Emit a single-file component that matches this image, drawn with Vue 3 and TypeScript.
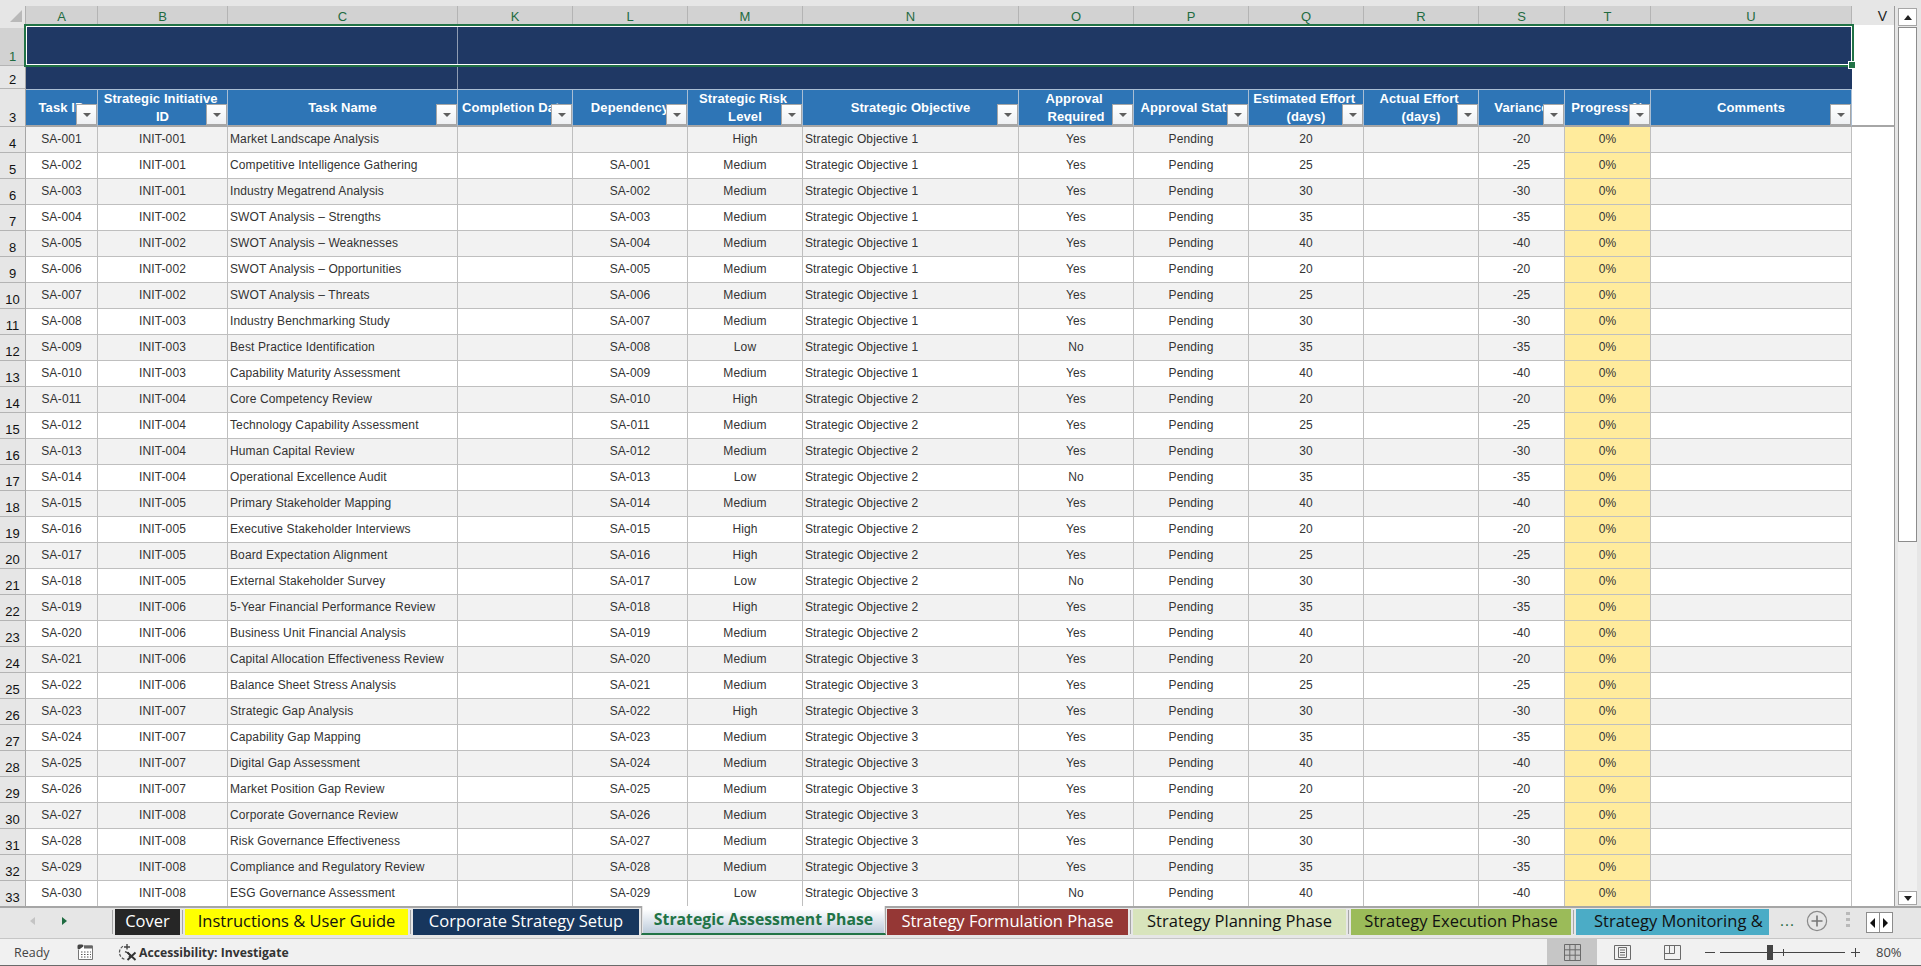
<script setup lang="ts">
const letters = ['A', 'B', 'C', 'K', 'L', 'M', 'N', 'O', 'P', 'Q', 'R', 'S', 'T', 'U']

// first lines keep their trailing space, it shifts them a bit to the left like in the sheet
const headers = [
  { label: 'Task ID', clip: false },
  { label: 'Strategic Initiative \nID', clip: false },
  { label: 'Task Name', clip: false },
  { label: 'Completion Date', clip: true },
  { label: 'Dependency', clip: false },
  { label: 'Strategic Risk \nLevel', clip: false },
  { label: 'Strategic Objective', clip: false },
  { label: 'Approval \nRequired', clip: false },
  { label: 'Approval Status', clip: false },
  { label: 'Estimated Effort \n(days)', clip: false },
  { label: 'Actual Effort \n(days)', clip: false },
  { label: 'Variance', clip: false },
  { label: 'Progress %', clip: false },
  { label: 'Comments', clip: false },
]

// name, initiative, risk
const tasks: [string, number, string][] = [
  ['Market Landscape Analysis', 1, 'High'],
  ['Competitive Intelligence Gathering', 1, 'Medium'],
  ['Industry Megatrend Analysis', 1, 'Medium'],
  ['SWOT Analysis – Strengths', 2, 'Medium'],
  ['SWOT Analysis – Weaknesses', 2, 'Medium'],
  ['SWOT Analysis – Opportunities', 2, 'Medium'],
  ['SWOT Analysis – Threats', 2, 'Medium'],
  ['Industry Benchmarking Study', 3, 'Medium'],
  ['Best Practice Identification', 3, 'Low'],
  ['Capability Maturity Assessment', 3, 'Medium'],
  ['Core Competency Review', 4, 'High'],
  ['Technology Capability Assessment', 4, 'Medium'],
  ['Human Capital Review', 4, 'Medium'],
  ['Operational Excellence Audit', 4, 'Low'],
  ['Primary Stakeholder Mapping', 5, 'Medium'],
  ['Executive Stakeholder Interviews', 5, 'High'],
  ['Board Expectation Alignment', 5, 'High'],
  ['External Stakeholder Survey', 5, 'Low'],
  ['5-Year Financial Performance Review', 6, 'High'],
  ['Business Unit Financial Analysis', 6, 'Medium'],
  ['Capital Allocation Effectiveness Review', 6, 'Medium'],
  ['Balance Sheet Stress Analysis', 6, 'Medium'],
  ['Strategic Gap Analysis', 7, 'High'],
  ['Capability Gap Mapping', 7, 'Medium'],
  ['Digital Gap Assessment', 7, 'Medium'],
  ['Market Position Gap Review', 7, 'Medium'],
  ['Corporate Governance Review', 8, 'Medium'],
  ['Risk Governance Effectiveness', 8, 'Medium'],
  ['Compliance and Regulatory Review', 8, 'Medium'],
  ['ESG Governance Assessment', 8, 'Low'],
]

const pad = (n: number) => String(n).padStart(3, '0')

const rows = tasks.map(([name, init, risk], i) => {
  const effort = 20 + (i % 5) * 5
  return {
    num: i + 4,
    id: 'SA-' + pad(i + 1),
    init: 'INIT-' + pad(init),
    name,
    dep: i === 0 ? '' : 'SA-' + pad(i),
    risk,
    objective: 'Strategic Objective ' + (i < 10 ? 1 : i < 20 ? 2 : 3),
    approval: risk === 'Low' ? 'No' : 'Yes',
    effort,
    variance: -effort,
  }
})

const tabs = [
  { name: 'Cover', cls: 'cover', width: 65 },
  { name: 'Instructions & User Guide', cls: 'guide', width: 223 },
  { name: 'Corporate Strategy Setup', cls: 'setup', width: 226 },
  { name: 'Strategic Assessment Phase', cls: 'active', width: 245 },
  { name: 'Strategy Formulation Phase', cls: 'form', width: 241 },
  { name: 'Strategy Planning Phase', cls: 'plan', width: 213 },
  { name: 'Strategy Execution Phase', cls: 'exec', width: 220 },
  { name: 'Strategy Monitoring &', cls: 'monitor', width: 193 },
]
</script>

<template>
  <div class="app">
    <div class="topstrip"></div>
    <div class="sheet">
      <div class="grid">
        <div class="row colheads">
          <div class="corner"><span class="corner-tri"></span></div>
          <div v-for="l in letters" :key="l" class="colhead">{{ l }}</div>
          <div class="colhead plain">V</div>
        </div>

        <div class="row banner r1">
          <div class="rowhead sel">1</div>
          <div class="band left"></div>
          <div class="band right"></div>
          <div class="blank"></div>
        </div>
        <div class="row banner r2">
          <div class="rowhead">2</div>
          <div class="band left"></div>
          <div class="band right"></div>
          <div class="blank"></div>
        </div>

        <div class="row r3">
          <div class="rowhead">3</div>
          <div v-for="h in headers" :key="h.label" class="th" :class="{ clip: h.clip }">
            <span class="th-text">{{ h.label }}</span>
            <span class="filter"><i></i></span>
          </div>
          <div class="blank under"></div>
        </div>

        <div v-for="(r, i) in rows" :key="r.id" class="row body" :class="{ odd: i % 2 === 0 }">
          <div class="rowhead">{{ r.num }}</div>
          <div class="td">{{ r.id }}</div>
          <div class="td">{{ r.init }}</div>
          <div class="td text">{{ r.name }}</div>
          <div class="td"></div>
          <div class="td">{{ r.dep }}</div>
          <div class="td">{{ r.risk }}</div>
          <div class="td text">{{ r.objective }}</div>
          <div class="td">{{ r.approval }}</div>
          <div class="td">Pending</div>
          <div class="td">{{ r.effort }}</div>
          <div class="td"></div>
          <div class="td">{{ r.variance }}</div>
          <div class="td progress">0%</div>
          <div class="td"></div>
          <div class="blank"></div>
        </div>

        <div class="selection"><span class="handle"></span></div>
      </div>

      <div class="vscroll">
        <div class="sb-btn up"><i></i></div>
        <div class="sb-thumb"></div>
        <div class="sb-track"></div>
        <div class="sb-btn down"><i></i></div>
      </div>
    </div>

    <div class="tabbar">
      <div class="tabnav">
        <i class="prev"></i>
        <i class="next"></i>
      </div>
      <div class="tabs">
        <template v-for="t in tabs" :key="t.name">
          <span class="tabsep"></span>
          <div class="tab" :class="t.cls" :style="{ width: t.width + 'px' }">
            <span>{{ t.name }}</span>
          </div>
        </template>
      </div>
      <span class="more">...</span>
      <svg class="add" width="22" height="22" viewBox="0 0 22 22">
        <circle cx="11" cy="11" r="9.6" fill="none" stroke="#8a8a8a" stroke-width="1.2" />
        <path d="M11 5.5v11M5.5 11h11" stroke="#777" stroke-width="1.6" />
      </svg>
      <span class="vdots"><i></i><i></i><i></i></span>
      <div class="tabscroll">
        <span><i class="tl"></i></span>
        <span><i class="tr"></i></span>
      </div>
    </div>

    <div class="status">
      <span class="ready">Ready</span>
      <svg class="macro" width="16" height="16" viewBox="0 0 16 16">
        <rect x="0.5" y="0.5" width="6" height="5" rx="1.5" fill="#444" />
        <path d="M7 2h8.5v13.5H1.5V6" fill="#fff" stroke="#777" />
        <path d="M7 1.5h8.5v3H7z" fill="#666" />
        <path d="M4 8h1.5M7 8h1.5M10 8h1.5M13 8h1M4 10.5h1.5M7 10.5h1.5M10 10.5h1.5M13 10.5h1M4 13h1.5M7 13h1.5M10 13h1.5M13 13h1" stroke="#555" />
      </svg>
      <svg class="access" width="20" height="18" viewBox="0 0 20 18">
        <path d="M6 3.2A7.2 7.2 0 0 0 8 16.4" fill="none" stroke="#555" stroke-width="1.2" stroke-dasharray="3 1.4" />
        <path d="M10 1v5.5M7 4h6" stroke="#444" stroke-width="1.4" />
        <path d="M8 8.6l3 1.2 2.4 3-1.6 1.4" fill="none" stroke="#444" stroke-width="1.4" />
        <path d="M10.5 9.5l8 7.5M18.5 9.5l-8 7.5" stroke="#333" stroke-width="1.9" />
      </svg>
      <span class="a11y">Accessibility: Investigate</span>
      <div class="spacer"></div>
      <div class="viewbtn on">
        <svg width="17" height="17" viewBox="0 0 17 17">
          <path d="M.5.5h16v16H.5zM5.8.5v16M11.2.5v16M.5 5.8h16M.5 11.2h16" fill="none" stroke="#6a6a6a" />
        </svg>
      </div>
      <div class="viewbtn">
        <svg width="17" height="15" viewBox="0 0 17 15">
          <path d="M.5.5h16v14H.5z" fill="none" stroke="#6a6a6a" />
          <path d="M4.5 2.5h8v10h-8zM6 5h5M6 7.5h5M6 10h5" fill="none" stroke="#6a6a6a" />
        </svg>
      </div>
      <div class="viewbtn">
        <svg width="17" height="15" viewBox="0 0 17 15">
          <path d="M.5.5h16v14H.5zM.5 8.5h10V.5M5.5.5v8" fill="none" stroke="#6a6a6a" />
        </svg>
      </div>
      <div class="zoombar">
        <span class="zminus"></span>
        <div class="slider"><span class="tick"></span><span class="knob"></span></div>
        <span class="zplus"></span>
        <span class="zpct">80%</span>
      </div>
    </div>
  </div>
</template>

<style>
html,
body {
  margin: 0;
  background: #e6e6e6;
  overflow: hidden;
}
</style>

<style scoped>
.app {
  width: 1921px;
  height: 966px;
  display: flex;
  flex-direction: column;
  font-family: "Liberation Sans", Arial, sans-serif;
  background: #e6e6e6;
  overflow: hidden;
}
.topstrip {
  height: 6px;
  flex: none;
}
.sheet {
  height: 900px;
  flex: none;
  display: flex;
  overflow: hidden;
}
.grid {
  width: 1895px;
  flex: none;
  position: relative;
  background: #fff;
}
.row {
  display: grid;
  grid-template-columns: 26px 72px 130px 230px 115px 115px 115px 216px 115px 115px 115px 115px 86px 86px 201px 43px;
}
.colheads {
  height: 19px;
  background: #d2d2d2;
}
.corner {
  background: #e6e6e6;
  border-right: 1px solid #b0b0b0;
  position: relative;
}
.corner-tri {
  position: absolute;
  left: 10px;
  top: 4px;
  width: 12px;
  height: 12px;
  background: #b9b9b9;
  clip-path: polygon(100% 0, 100% 100%, 0 100%);
}
.colhead {
  border-right: 1px solid #b4b4b4;
  text-align: center;
  font-size: 13px;
  line-height: 21px;
  color: #1f6b41;
}
.colhead.plain {
  background: #e6e6e6;
  color: #222;
  font-size: 14px;
  padding-left: 19px;
  border-right: 1px solid #9c9c9c;
  border-bottom: 1px solid #9c9c9c;
}
.rowhead {
  background: #e6e6e6;
  border-right: 1px solid #a6a6a6;
  border-bottom: 1px solid #b4b4b4;
  display: flex;
  align-items: flex-end;
  justify-content: center;
  font-size: 13px;
  line-height: 15px;
  padding-bottom: 1px;
  box-sizing: border-box;
  color: #111;
}
.rowhead.sel {
  background: #d2d2d2;
  color: #1f6b41;
}
.r1 {
  height: 41px;
}
.r2 {
  height: 23px;
}
.r3 {
  height: 38px;
}
.band {
  background: #1f3864;
}
.band.left {
  grid-column: 2 / 5;
  border-right: 1px solid #8f9cb2;
}
.band.right {
  grid-column: 5 / 16;
  margin-right: -1px;
}
.blank {
  background: #fff;
  border-right: 1px solid #9c9c9c;
}
.blank.under {
  border-bottom: 2px solid #a6a6a6;
}
.th {
  position: relative;
  background: #2e75b6;
  border-right: 1px solid #a9bdd3;
  border-top: 1px solid #a9bdd3;
  border-bottom: 2px solid #a6a6a6;
  box-sizing: border-box;
  display: flex;
  align-items: center;
  justify-content: center;
  overflow: hidden;
  color: #fff;
  font-weight: bold;
  font-size: 13px;
  letter-spacing: 0.1px;
  line-height: 18px;
  text-align: center;
}
.th-text {
  white-space: pre;
  margin-top: 1px;
}
.th.clip {
  justify-content: flex-start;
  padding-left: 4px;
}
.filter {
  position: absolute;
  right: 0;
  bottom: 0;
  width: 21px;
  height: 21px;
  box-sizing: border-box;
  background: linear-gradient(#fff, #eef0f3);
  border: 1px solid #a6a6a6;
  display: flex;
  align-items: center;
  justify-content: center;
}
.filter i {
  width: 0;
  height: 0;
  border-left: 4px solid transparent;
  border-right: 4px solid transparent;
  border-top: 4px solid #5f5f5f;
}
.body {
  height: 26px;
}
.td {
  border-right: 1px solid #bfbfbf;
  border-bottom: 1px solid #bfbfbf;
  box-sizing: border-box;
  text-align: center;
  font-size: 12px;
  letter-spacing: 0.12px;
  line-height: 25px;
  color: #333;
  white-space: nowrap;
  overflow: hidden;
}
.td.text {
  text-align: left;
  padding-left: 2px;
}
.odd .td {
  background: #f2f2f2;
}
.odd .td.progress,
.td.progress {
  background: #ffeb9c;
}
.selection {
  position: absolute;
  left: 24px;
  top: 18px;
  width: 1830px;
  height: 43px;
  box-sizing: border-box;
  border: 2px solid #217346;
  box-shadow: inset 0 0 0 1px #fff;
  pointer-events: none;
}
.handle {
  position: absolute;
  right: -4px;
  bottom: -4px;
  width: 6px;
  height: 6px;
  background: #217346;
  border: 1px solid #fff;
}
.vscroll {
  flex: 1;
  display: flex;
  flex-direction: column;
  padding: 2px 4px 1px 3px;
  box-sizing: border-box;
  background: #e6e6e6;
}
.sb-btn {
  height: 18px;
  flex: none;
  box-sizing: border-box;
  background: #fff;
  border: 1px solid #a6a6a6;
  display: flex;
  align-items: center;
  justify-content: center;
}
.sb-btn.down {
  height: 14px;
}
.sb-btn i {
  width: 0;
  height: 0;
  border-left: 4.5px solid transparent;
  border-right: 4.5px solid transparent;
}
.sb-btn.up i {
  border-bottom: 5px solid #222;
}
.sb-btn.down i {
  border-top: 5px solid #222;
}
.sb-thumb {
  height: 515px;
  flex: none;
  margin-top: 1px;
  background: #fff;
  border: 1px solid #8c8c8c;
  box-sizing: border-box;
}
.sb-track {
  flex: 1;
  background: #f0f0f0;
}
.tabbar {
  height: 32px;
  flex: none;
  box-sizing: border-box;
  border-top: 2px solid #a6a6a6;
  display: flex;
  align-items: flex-start;
  background: #e6e6e6;
  position: relative;
}
.tabnav {
  width: 110px;
  flex: none;
  height: 26px;
  position: relative;
}
.tabnav i {
  position: absolute;
  top: 9px;
  width: 0;
  height: 0;
  border-top: 4.5px solid transparent;
  border-bottom: 4.5px solid transparent;
}
.tabnav .prev {
  left: 30px;
  border-right: 5px solid #c4c4c4;
}
.tabnav .next {
  left: 62px;
  border-left: 5px solid #1f6b41;
}
.tabs {
  display: flex;
  align-items: flex-start;
  flex: none;
  height: 28px;
}
.tabsep {
  width: 1px;
  height: 24px;
  margin: 2px 2px 0 2px;
  background: #a6a6a6;
}
.tab {
  height: 26px;
  margin-top: 1px;
  padding-bottom: 3px;
  box-sizing: border-box;
  display: flex;
  align-items: center;
  justify-content: center;
  font-family: "Open Sans", "Noto Sans", sans-serif;
  font-size: 16.5px;
  white-space: nowrap;
  overflow: hidden;
}
.tab.cover {
  background: #262626;
  color: #fff;
}
.tab.guide {
  background: #ffff00;
  color: #111;
}
.tab.setup {
  background: #17365d;
  color: #fff;
}
.tab.active {
  margin: -2px -4px 0 -3px;
  height: 29px;
  padding-top: 2px;
  position: relative;
  background: linear-gradient(#fff 12%, #bccbdb);
  border-left: 1px solid #a6a6a6;
  border-right: 1px solid #a6a6a6;
  border-bottom: 2px solid #217346;
  box-shadow: inset 1px 0 0 #e6e6e6, inset -1px 0 0 #e6e6e6;
  color: #217346;
  font-size: 15.8px;
  font-weight: bold;
}
.tab.form {
  background: #953735;
  color: #fff;
}
.tab.plan {
  background: #d8e4bc;
  color: #111;
}
.tab.exec {
  background: #9bbb59;
  color: #111;
}
.tab.monitor {
  background: #4bacc6;
  color: #111;
  justify-content: flex-start;
  padding-left: 18px;
}
.more {
  margin-left: 11px;
  color: #1f6b41;
  font-family: "Open Sans", sans-serif;
  font-size: 15px;
  line-height: 24px;
  letter-spacing: 1px;
}
.add {
  margin: 2px 0 0 11px;
  flex: none;
}
.vdots {
  margin: 4px 0 0 18px;
  width: 4px;
  display: flex;
  flex-direction: column;
  gap: 3px;
}
.vdots i {
  display: block;
  width: 4px;
  height: 3px;
  background: #b9b9b9;
}
.tabscroll {
  margin: 4px 0 0 16px;
  display: flex;
  height: 19px;
  border: 1px solid #8c8c8c;
  background: #fff;
}
.tabscroll span {
  width: 12px;
  display: flex;
  align-items: center;
  justify-content: center;
}
.tabscroll span + span {
  border-left: 1px solid #8c8c8c;
}
.tabscroll i {
  width: 0;
  height: 0;
  border-top: 5px solid transparent;
  border-bottom: 5px solid transparent;
}
.tabscroll .tl {
  border-right: 5px solid #111;
}
.tabscroll .tr {
  border-left: 5px solid #111;
}
.status {
  height: 28px;
  flex: none;
  box-sizing: border-box;
  background: #f1f1f1;
  border-top: 1px solid #c6c6c6;
  border-bottom: 1px solid #6a6a6a;
  display: flex;
  align-items: center;
  font-family: "Open Sans", "Noto Sans", sans-serif;
  font-size: 12.5px;
  color: #444;
}
.ready {
  margin-left: 14px;
  width: 63px;
}
.macro {
  flex: none;
}
.access {
  margin-left: 24px;
  flex: none;
}
.a11y {
  margin-left: 2px;
  font-size: 12.2px;
  font-weight: bold;
  color: #333;
}
.spacer {
  flex: 1;
}
.viewbtn {
  width: 50px;
  height: 100%;
  display: flex;
  align-items: center;
  justify-content: center;
}
.viewbtn.on {
  background: #c6c6c6;
}
.zoombar {
  display: flex;
  align-items: center;
  margin-left: 8px;
  width: 216px;
}
.zminus {
  width: 10px;
  height: 1px;
  background: #444;
}
.slider {
  width: 125px;
  height: 1px;
  background: #444;
  margin-left: 5px;
  position: relative;
}
.knob {
  position: absolute;
  left: 47px;
  top: -7px;
  width: 6px;
  height: 15px;
  background: #444;
}
.tick {
  position: absolute;
  left: 63px;
  top: -3px;
  width: 1px;
  height: 7px;
  background: #444;
}
.zplus {
  width: 9px;
  height: 9px;
  margin-left: 6px;
  background: linear-gradient(#444, #444) center / 100% 1px no-repeat, linear-gradient(#444, #444) center / 1px 100% no-repeat;
}
.zpct {
  margin-left: 16px;
  font-size: 13px;
}
</style>
